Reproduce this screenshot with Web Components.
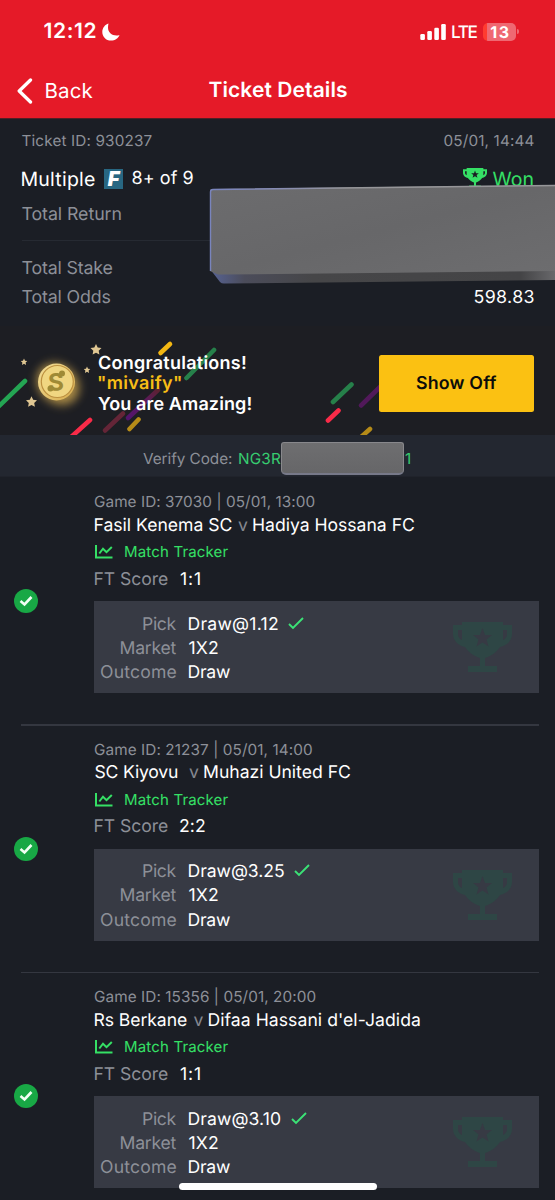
<!DOCTYPE html>
<html lang="en">
<head>
<meta charset="utf-8">
<title>Ticket Details</title>
<style>
body{margin:0;background:#1b1e25;font-family:Inter,"Liberation Sans",sans-serif;overflow:hidden}
</style>
</head>
<body>
<ticket-page></ticket-page>
<script>
const define = (name, html, setup) => {
  const t = document.createElement('template');
  t.innerHTML = html;
  customElements.define(name, class extends HTMLElement {
    connectedCallback() {
      if (this.shadowRoot) return;
      const root = this.attachShadow({mode: 'open'});
      root.append(t.content.cloneNode(true));
      if (setup) setup(this, root);
    }
  });
};

// Text run tracked so that its ink spans exactly the width given in "w".
const pen = document.createElement('canvas').getContext('2d');
define('t-text', `<style>
:host{display:block;flex:none;white-space:pre;text-rendering:geometricPrecision}
span{display:block}
</style><span><slot></slot></span>`, (el, root) => {
  const w = parseFloat(el.getAttribute('w'));
  const s = root.querySelector('span'), text = el.textContent, cs = getComputedStyle(el);
  pen.font = `${cs.fontWeight} ${cs.fontSize} ${cs.fontFamily}`;
  const m = pen.measureText(text), ink = m.actualBoundingBoxLeft + m.actualBoundingBoxRight;
  el.style.width = w + 'px';
  s.style.marginLeft = m.actualBoundingBoxLeft + 'px';
  if (text.length > 1) s.style.letterSpacing = (w - ink) / (text.length - 1) + 'px';
});

define('trophy-icon', `<style>:host{display:block}svg{display:block;width:100%;height:100%}</style>
<svg viewBox="0 0 59 50" preserveAspectRatio="none"><path fill="currentColor" fill-rule="evenodd" d="M9 0H50V3H59V12C59 20 52 24 47 25C43 31 38 34 32 36V44H44V50H15V44H27V36C21 34 16 31 12 25C7 24 0 20 0 12V3H9ZM5 8V13Q6 17 9 18V8ZM54 8H50V18Q53 17 54 13ZM29.500 6L27 13H20L25.500 17.500L23.500 24.500L29.500 20.500L35.500 24.500L33.500 17.500L39 13H32Z"/></svg>`);

define('status-bar', `<style>
:host{display:flex;height:63px;box-sizing:border-box;align-items:center;padding:1px 36px 0 43.500px;font-size:21px;font-weight:600;line-height:30px;color:#fff}
.moon{margin-left:6px}.sp{flex:1}.lte{font-size:17.200px;font-weight:500;margin:1px 5.500px 0 6px}
.bat{width:33px;height:18px;border-radius:5px;background:linear-gradient(90deg,#ff3b30 4px,#ef6872 4px);display:flex;justify-content:center;align-items:center;font-size:16px;font-weight:700;line-height:18px}
.cap{width:2px;height:5px;border-radius:0 2px 2px 0;background:#ef6872;margin-left:1px}
.bat,.cap,.bars{position:relative;top:-.5px}
</style>
<t-text w="52">12:12</t-text>
<svg class="moon" width="18" height="18" viewBox="0 0 18 18"><path fill="#fff" d="M6.500.500C3 1.500.300 5 .300 9C.300 13.800 4 17.600 9 17.600C13 17.600 16.300 15.300 17.500 12C16.500 12.400 15.500 12.500 14.500 12.500C9.500 12.500 6 9 6 4.500C6 3 6.200 1.700 6.500.500Z"/></svg>
<div class="sp"></div>
<svg class="bars" width="26" height="16" viewBox="0 0 26 16" fill="#fff"><rect x=".3" y="10" width="4.600" height="6" rx="1.300"/><rect x="7.300" y="7" width="4.600" height="9" rx="1.300"/><rect x="14.300" y="3.800" width="4.600" height="12.200" rx="1.300"/><rect x="21.200" width="4.600" height="16" rx="1.300"/></svg>
<t-text class="lte" w="25.500">LTE</t-text>
<div class="bat"><t-text w="18.500">13</t-text></div><div class="cap"></div>`);

define('nav-bar', `<style>
:host{display:grid;grid-template-columns:45.500px 163px auto 1fr;height:55px;box-sizing:border-box;padding-top:1px;align-items:center;color:#fff;line-height:30px;font-size:20.500px}
svg{margin-left:16.500px}
.title{font-size:21px;font-weight:600}
:host>*{margin-bottom:1px}
</style>
<svg width="16" height="26" viewBox="0 0 16 26"><path d="M13.500 2L2.200 13L13.500 24" fill="none" stroke="#fff" stroke-width="3.300" stroke-linecap="round" stroke-linejoin="round"/></svg>
<t-text w="47">Back</t-text><t-text class="title" w="138.500">Ticket Details</t-text>`);

define('ticket-summary', `<style>
:host{display:block;position:relative;height:208px;box-sizing:border-box;padding:11px 21.500px 0;background:#1b1e25;border-top:1px solid #511e25;color:#8d9098;font-size:17.800px}
.row{display:flex;align-items:center;justify-content:space-between;height:28px;line-height:28px}
.id{font-size:15.300px;height:23px;margin-top:-1px}
.type{margin-top:11px;height:31px;color:#fff;font-size:19.500px;justify-content:flex-start}
.f{width:19px;height:20px;background:#286782;margin:0 9.500px 0 9px;text-align:center;font:italic 900 20px/20px Inter,sans-serif;color:#fff}
.eight{font-size:18px}.won{display:flex;align-items:center;margin-left:auto;color:#35e065;gap:6px}
trophy-icon{width:24px;height:20px}
.type,.won{padding-right:0}.won trophy-icon{margin-top:-2px}
.ret{margin-top:7px}.line{height:1px;background:#262a32;margin:11px 0 13.500px}
.odds{margin-top:1px}.v{color:#fff}
.cover{position:absolute;left:208px;top:64px}
</style>
<div class="row id"><t-text w="130">Ticket ID: 930237</t-text><t-text w="90">05/01, 14:44</t-text></div>
<div class="row type"><t-text w="73.500">Multiple</t-text><span class="f">F</span><t-text class="eight" w="61">8+ of 9</t-text><div class="won"><trophy-icon></trophy-icon><t-text w="41">Won</t-text></div></div>
<div class="row ret"><t-text w="100">Total Return</t-text></div>
<div class="line"></div>
<div class="row"><t-text w="91">Total Stake</t-text></div>
<div class="row odds"><t-text w="89">Total Odds</t-text><t-text class="v" w="59">598.83</t-text></div>
<svg class="cover" width="347" height="104" viewBox="0 0 347 104"><defs><linearGradient id="a"><stop stop-color="#576395"/><stop offset=".1" stop-color="#4b4c5a"/><stop offset=".3" stop-color="#464648"/><stop offset=".9" stop-color="#444446"/><stop offset="1" stop-color="#68686b"/></linearGradient><linearGradient id="b"><stop stop-color="#7984bd"/><stop offset=".18" stop-color="#858bb5"/><stop offset=".4" stop-color="#969699"/></linearGradient><linearGradient id="c" x1="0" y1="0" x2="1" y2="1"><stop stop-color="#6c6c6e"/><stop offset=".5" stop-color="#676769"/><stop offset="1" stop-color="#6d6d6f"/></linearGradient></defs>
<path fill="url(#a)" d="M2 86L12 99Q14 101 17 100.500L347 97V84Z"/><path fill="url(#c)" d="M2 8Q2 6 4 6L347 2V88L15 91.500H10L2 88Z"/><path d="M2.500 88V9Q2.500 6.500 5 6.500L347 2.500" fill="none" stroke="url(#b)" stroke-width="1.400"/></svg>`);

define('win-banner', `<style>
:host{display:flex;position:relative;height:109px;background:#1d1e23;box-sizing:border-box;padding:26px 21px 0 98px;justify-content:space-between;overflow:hidden;color:#fff;font-weight:600;font-size:18px;line-height:20.800px}
.art{position:absolute;left:0;top:0}.msg{position:relative;margin-top:1.500px}.name{color:#f7bd16}
.btn{position:relative;width:155.500px;height:57.500px;margin-top:2.500px;background:#fbc112;border-radius:2.500px;box-sizing:border-box;padding:1.500px 0 0;display:flex;align-items:center;justify-content:center;color:#0c0c0a;font-size:17.800px}
</style>
<svg class="art" width="555" height="109" viewBox="0 326 555 109"><defs><filter id="blur" x="-50%" y="-50%" width="200%" height="200%"><feGaussianBlur stdDeviation="5"/></filter><linearGradient id="gold" x1="0" y1="0" x2="1" y2="1"><stop stop-color="#f3df99"/><stop offset="1" stop-color="#d8ad4d"/></linearGradient><linearGradient id="p" gradientUnits="userSpaceOnUse" x1="128" y1="418" x2="158" y2="390"><stop stop-color="#52146c"/><stop offset=".6" stop-color="#5a195c"/><stop offset="1" stop-color="#5c2230"/></linearGradient></defs>
<g fill="none" stroke-width="4.600" stroke-linecap="round"><path stroke="#24a553" d="M-4 409L25 381"/><path stroke="#f92b48" d="M70 438L90 420M328 420.500L338.500 410.500"/><path stroke="#642537" d="M105 430.500L123 413.500"/><path stroke="url(#p)" d="M128 418L158 390"/><path stroke="#b58b18" d="M129.500 429L138.500 419.500M360 438L370 429"/><path stroke="#f3b713" d="M160.500 353L170 344"/><path stroke="#26804a" d="M186.500 378L214 350M333 402L351.500 384.500"/><path stroke="#51195a" d="M361 405.500L382 385"/></g>
<ellipse cx="58" cy="384" rx="23" ry="19" fill="#b8954a" opacity=".9" filter="url(#blur)" transform="rotate(42 58 384)"/>
<circle cx="56.500" cy="382" r="18.500" fill="url(#gold)"/><circle cx="57.300" cy="381.500" r="16" fill="#f0d681" stroke="#bd9140" stroke-width="1.200"/>
<text x="56" y="390.500" transform="rotate(-3 56 382)" text-anchor="middle" font-family="Inter,sans-serif" font-size="24" font-weight="700" fill="#9f8a36">S</text><g fill="#9f8a36"><circle cx="62" cy="373.500" r="3"/><circle cx="50.500" cy="388.500" r="3"/></g>
<g fill="#e0c793"><path id="st" d="M96 344L97.700 347.500L101.500 348L98.700 350.700L99.400 354.500L96 352.700L92.600 354.500L93.300 350.700L90.500 348L94.300 347.500Z"/><use href="#st" transform="translate(-64.500 52.200)"/><use href="#st" transform="translate(-33.600 152.200) scale(.6)"/><use href="#st" transform="translate(29.400 160.200) scale(.6)"/></g></svg>
<div class="msg"><t-text w="148">Congratulations!</t-text><t-text class="name" w="83">"mivaify"</t-text><t-text w="153.500">You are Amazing!</t-text></div>
<div class="btn"><t-text w="80.500">Show Off</t-text></div>`);

define('verify-bar', `<style>
:host{display:flex;position:relative;height:42px;background:#232730;padding:2px 0 0 143px;box-sizing:border-box;font-size:15.300px;line-height:44px;color:#8d9098;border-bottom:1px solid #20232b}
.g{color:#37cd70;margin-left:7px}.o{margin-left:124px}
.mask{position:absolute;left:280.500px;top:7px;width:123px;height:33px;box-sizing:border-box;border:1px solid #88888c;border-bottom:2px solid #777989;border-radius:3px 3px 5px 5px;background:linear-gradient(#6e6e70,#666668)}
</style><t-text w="89">Verify Code:</t-text><t-text class="g" w="42">NG3R</t-text><t-text class="g o" w="5.500">1</t-text><div class="mask"></div>`);

define('game-item', `<style>
:host{display:grid;grid-template-columns:94px 445px;height:247.500px;box-sizing:border-box;position:relative;color:#8d9098;font-size:17.600px}
.ok{align-self:start;margin:112px 0 0 14px}
.id{font-size:15.300px;line-height:22px;padding-top:14px}
.teams{display:flex;line-height:23px;padding:.5px 0 0 .5px;color:#fff}.v{color:#858890}
.track{display:flex;align-items:center;margin-top:3.500px;height:24px;line-height:24px;font-size:15px;color:#35e065;padding-left:1px}
.track t-text{margin-left:12px}
.score{display:flex;gap:12px;line-height:26px;margin-top:2.500px;height:26px;padding-left:.5px}
.w{color:#fff}
.box{height:92px;box-sizing:border-box;background:#373a44;margin-top:8.500px;padding-top:11.500px;position:relative}
.r{display:grid;grid-template-columns:82.500px auto;column-gap:12px;line-height:24.300px;height:24.300px}
.r t-text:first-child{justify-self:end}
.pick{display:flex;gap:9.500px;align-items:center}.pick svg{margin-top:-3px}
trophy-icon{position:absolute;left:359px;top:21px;width:59px;height:50px;color:#2e4645}
.sep{position:absolute;left:21px;right:16px;bottom:-1px;height:1.500px;background:#343740}
:host([last]) .sep{display:none}
</style>
<svg class="ok" width="24" height="24" viewBox="0 0 24 24"><circle cx="12" cy="12" r="12" fill="#18a845"/><path d="M6.500 12L10.500 15.500L17.500 8" fill="none" stroke="#f0fff4" stroke-width="2.600"/></svg>
<div><t-text class="id"></t-text><div class="teams"></div>
<div class="track"><svg width="18" height="14" viewBox="0 0 18 14" fill="none" stroke="currentColor" stroke-width="2"><path d="M1 0V12.500H17.500M4.300 8.500L8 3.700L11.500 7.200L16.800 2"/></svg><t-text w="103.500">Match Tracker</t-text></div>
<div class="score"><t-text w="73.500">FT Score</t-text><span class="s w"></span></div>
<div class="box"><trophy-icon></trophy-icon>
<div class="r"><t-text w="33.500">Pick</t-text><div class="pick w"><span class="p"></span><svg width="16" height="13" viewBox="0 0 16 13"><path d="M1 7L5 11L15 1" fill="none" stroke="#3be276" stroke-width="1.900"/></svg></div></div>
<div class="r"><t-text w="56">Market</t-text><t-text class="w" w="29.500">1X2</t-text></div>
<div class="r"><t-text w="75.500">Outcome</t-text><t-text class="w" w="41.500">Draw</t-text></div></div></div><div class="sep"></div>`, (el, root) => {
  const fill = (sel, key) => {
    const [text, w] = el.getAttribute(key).split('~');
    const old = root.querySelector(sel), n = document.createElement('t-text');
    n.className = old.className; n.setAttribute('w', w); n.textContent = text; old.replaceWith(n);
  };
  fill('.id', 'game'); fill('.s', 'score'); fill('.p', 'pick');
  const [a, aw, g1, g2, b, bw] = el.getAttribute('teams').split('~'), row = root.querySelector('.teams');
  for (const [text, w, cls, gap] of [[a, aw, '', 0], ['v', 9, 'v', g1], [b, bw, '', g2]]) {
    const n = document.createElement('t-text');
    n.className = cls; n.setAttribute('w', w); n.style.marginLeft = gap + 'px'; n.textContent = text; row.append(n);
  }
});

define('ticket-page', `<style>
:host{display:block;position:relative;width:555px;height:1200px;overflow:hidden;background:#1b1e25}
header{background:#e51a28;height:118px}
.home{position:absolute;left:178.500px;top:1183px;width:198.500px;height:6.500px;border-radius:4px;background:#fff}
</style>
<header><status-bar></status-bar><nav-bar></nav-bar></header>
<ticket-summary></ticket-summary><win-banner></win-banner><verify-bar></verify-bar>
<main>
<game-item game="Game ID: 37030 | 05/01, 13:00~220.500" teams="Fasil Kenema SC~137~6.500~6~Hadiya Hossana FC~161" score="1:1~20" pick="Draw@1.12~89.500"></game-item>
<game-item game="Game ID: 21237 | 05/01, 14:00~218" teams="SC Kiyovu~83.500~11~6~Muhazi United FC~146" score="2:2~25" pick="Draw@3.25~95.500"></game-item>
<game-item last game="Game ID: 15356 | 05/01, 20:00~221.500" teams="Rs Berkane~92.500~6.500~6~Difaa Hassani d'el-Jadida~211.500" score="1:1~20" pick="Draw@3.10~92.500"></game-item>
</main><div class="home"></div>`);
</script>
</body>
</html>
